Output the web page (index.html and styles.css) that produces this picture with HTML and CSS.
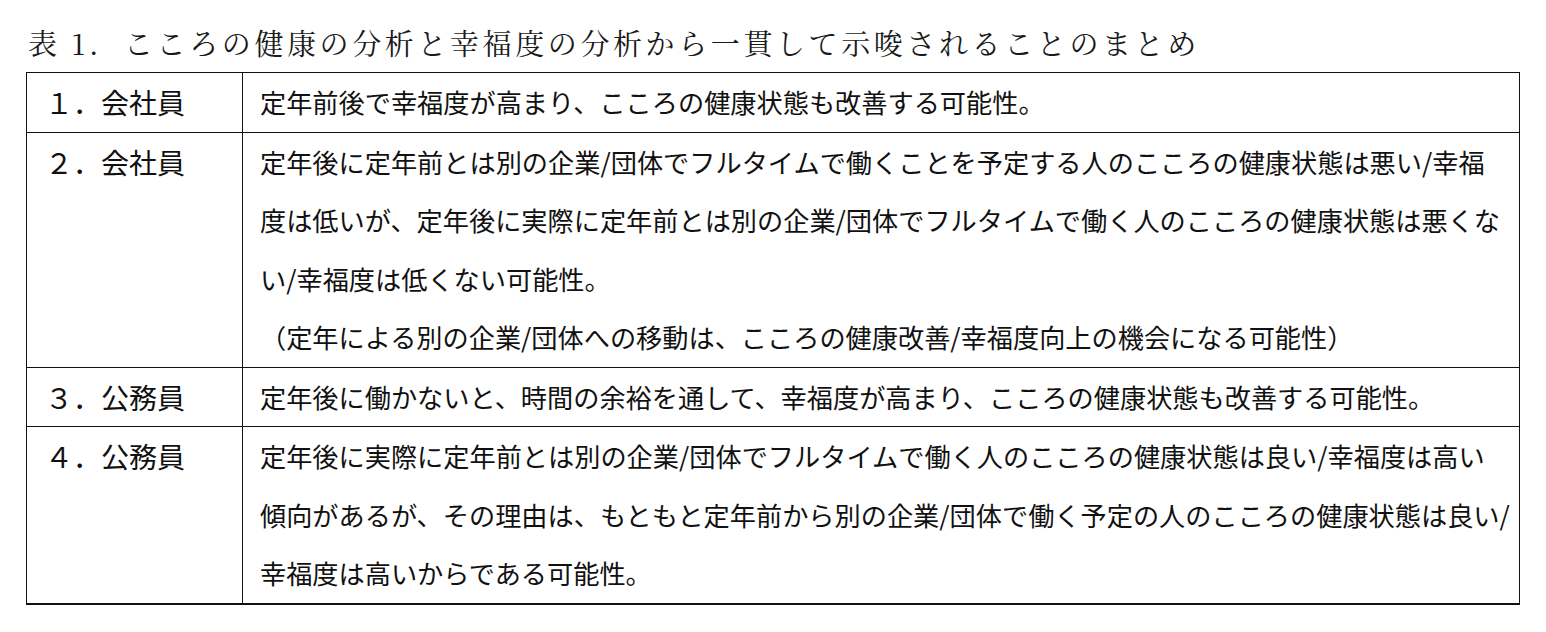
FILE: index.html
```html
<!DOCTYPE html>
<html lang="ja">
<head>
<meta charset="utf-8">
<link rel="stylesheet" href="styles.css">
</head>
<body>
<div class="page">
  <h1 class="title">表 1.&nbsp;&nbsp;こころの健康の分析と幸福度の分析から一貫して示唆されることのまとめ</h1>
  <table class="summary">
    <colgroup>
      <col class="col-label">
      <col class="col-body">
    </colgroup>
    <tr>
      <td class="label">１．会社員</td>
      <td class="body">定年前後で幸福度が高まり、こころの健康状態も改善する可能性。</td>
    </tr>
    <tr>
      <td class="label">２．会社員</td>
      <td class="body">定年後に定年前とは別の企業/団体でフルタイムで働くことを予定する人のこころの健康状態は悪い/幸福<br>度は低いが、定年後に実際に定年前とは別の企業/団体でフルタイムで働く人のこころの健康状態は悪くな<br>い/幸福度は低くない可能性。<br>（定年による別の企業/団体への移動は、こころの健康改善/幸福度向上の機会になる可能性）</td>
    </tr>
    <tr>
      <td class="label">３．公務員</td>
      <td class="body">定年後に働かないと、時間の余裕を通して、幸福度が高まり、こころの健康状態も改善する可能性。</td>
    </tr>
    <tr class="last">
      <td class="label">４．公務員</td>
      <td class="body">定年後に実際に定年前とは別の企業/団体でフルタイムで働く人のこころの健康状態は良い/幸福度は高い<br>傾向があるが、その理由は、もともと定年前から別の企業/団体で働く予定の人のこころの健康状態は良い/<br>幸福度は高いからである可能性。</td>
    </tr>
  </table>
</div>
</body>
</html>
```
FILE: styles.css
```css
html, body {
  margin: 0;
  padding: 0;
  background: #ffffff;
}

.page {
  padding: 24px 0 0 26px;
  color: #111111;
}

.title {
  margin: 0 0 10px 2px;
  font-family: "Noto Serif CJK JP", "Noto Sans CJK JP", serif;
  font-weight: 400;
  font-size: 29px;
  line-height: 38px;
  letter-spacing: 3.6px;
  color: #1a1a1a;
  white-space: nowrap;
}

.summary {
  border-collapse: collapse;
  table-layout: fixed;
  width: 1494px;
  font-family: "Noto Sans CJK JP", sans-serif;
  font-size: 26.2px;
  line-height: 58.5px;
  color: #111111;
}

.col-label {
  width: 216px;
}

.summary td {
  border: 1px solid #111111;
  padding: 0;
  vertical-align: top;
  white-space: nowrap;
}

.summary .label {
  padding-left: 18px;
  font-size: 28px;
}

.summary .body {
  padding-left: 17px;
}

.summary .last td {
  border-bottom: 2px solid #111111;
}
```
